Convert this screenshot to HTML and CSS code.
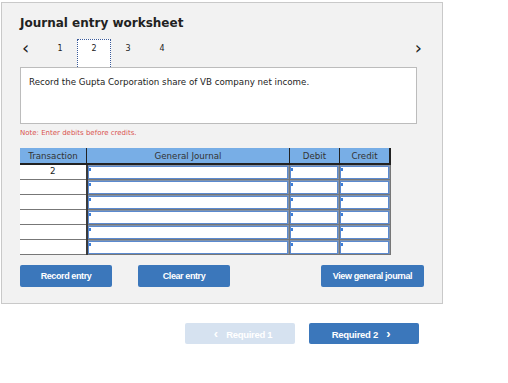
FILE: index.html
```html
<!DOCTYPE html>
<html lang="en">
<head>
    <meta charset="UTF-8">
    <title>Journal entry worksheet</title>
    <link rel="stylesheet" href="styles.css">
</head>
<body>
    <div class="panel">
        <h3 class="title">Journal entry worksheet</h3>
        <div class="tabs">
            <span class="arrow">&lsaquo;</span>
            <span class="tab">1</span>
            <span class="tab active">2</span>
            <span class="tab">3</span>
            <span class="tab">4</span>
            <span class="arrow right">&rsaquo;</span>
        </div>
        <div class="question">Record the Gupta Corporation share of VB company net income.</div>
        <p class="note">Note: Enter debits before credits.</p>
        <table class="journal">
            <thead>
                <tr>
                    <th class="c-trans">Transaction</th>
                    <th class="c-acct">General Journal</th>
                    <th class="c-num">Debit</th>
                    <th class="c-num">Credit</th>
                </tr>
            </thead>
            <tbody id="rows"></tbody>
        </table>
        <div class="actions">
            <button class="btn">Record entry</button>
            <button class="btn">Clear entry</button>
            <button class="btn wide">View general journal</button>
        </div>
    </div>
    <div class="pager">
        <button class="btn nav disabled"><span class="chev">&lsaquo;</span> Required 1</button>
        <button class="btn nav">Required 2 <span class="chev">&rsaquo;</span></button>
    </div>
    <script>
        let rows = document.getElementById("rows");
        for (let i = 0; i < 6; i++) {
            rows.innerHTML += `
                <tr>
                    <td class="trans">${i === 0 ? "2" : ""}</td>
                    <td class="cell"><div class="field"></div></td>
                    <td class="cell"><div class="field"></div></td>
                    <td class="cell"><div class="field"></div></td>
                </tr>
            `;
        }
    </script>
</body>
</html>
```

FILE: styles.css
```css
body {
    margin: 0;
    font-family: "DejaVu Sans", Verdana, sans-serif;
    color: #222;
    background: #fff;
}
.panel {
    width: 422px;
    height: 284px;
    margin: 2px 0 0 1px;
    padding: 12px 0 4px 18px;
    background: #f2f2f2;
    border: 1px solid #c9c9c9;
}
.title {
    margin: 0;
    font-size: 12px;
    line-height: 17px;
    font-weight: bold;
}
.tabs {
    display: flex;
    height: 28px;
    margin-top: 7px;
    width: 402px;
}
.arrow {
    width: 23px;
    font-size: 18px;
    line-height: 18px;
    padding-left: 2px;
    box-sizing: border-box;
}
.arrow.right {
    margin-left: auto;
    width: auto;
    padding: 0;
}
.tab {
    width: 34px;
    text-align: center;
    font-size: 8px;
    padding-top: 5px;
    box-sizing: border-box;
}
.tab.active {
    background: #fff;
    border: 1px dotted #3a5a9a;
    border-bottom: none;
    padding-top: 4px;
}
.question {
    width: 379px;
    height: 39px;
    padding: 8px 8px;
    background: #fff;
    border: 1px solid #bcbcbc;
    font-size: 8.7px;
    line-height: 12px;
}
.note {
    margin: 4px 0 0;
    font-size: 7px;
    line-height: 10px;
    color: #d9534f;
}
.journal {
    margin-top: 10px;
    width: 367px;
    border-collapse: collapse;
    table-layout: fixed;
    font-size: 8.7px;
}
.journal th {
    height: 15px;
    padding: 0;
    background: #78aee6;
    color: #333;
    font-weight: normal;
    border-left: 1px solid #222;
    border-bottom: 2px solid #222;
}
.journal th:first-child {
    border-left: none;
}
.journal th:last-child {
    border-right: 2px solid #222;
}
.c-trans { width: 66px; }
.c-acct { width: 202px; }
.c-num { width: 49px; }
.journal td {
    padding: 0;
    height: 15px;
    box-sizing: border-box;
    border-bottom: 1px solid #777;
}
.trans {
    background: #fff;
    text-align: center;
    vertical-align: top;
    line-height: 13px;
    border-right: 2px solid #3b3b3b;
}
.cell {
    background: #8192aa;
    padding: 1px 1px 0 0 !important;
    border-right: 1px solid #777;
}
.field {
    position: relative;
    height: 11px;
    background: #fff;
    border: 1px solid #5b8ad0;
}
.field::before {
    content: "";
    position: absolute;
    left: 0;
    top: 1px;
    width: 2px;
    height: 3px;
    background: #3c7dd6;
}
.actions {
    display: flex;
    margin-top: 10px;
    width: 404px;
}
.btn {
    height: 22px;
    width: 92px;
    border: none;
    border-radius: 2px;
    background: #3b77bb;
    color: #fff;
    font-family: "Liberation Sans", Arial, sans-serif;
    font-weight: bold;
    font-size: 9px;
    letter-spacing: -0.4px;
    padding: 0;
}
.actions .btn + .btn {
    margin-left: 26px;
}
.actions .wide {
    margin-left: auto !important;
    width: 103px;
}
.pager {
    display: flex;
    gap: 14px;
    margin: 19px 0 0 185px;
}
.btn.nav {
    width: 110px;
    height: 21px;
    font-size: 9.5px;
    letter-spacing: -0.3px;
}
.btn.disabled {
    background: #d6e2f0;
}
.chev {
    font-size: 13px;
    margin: 0 6px;
}
```
